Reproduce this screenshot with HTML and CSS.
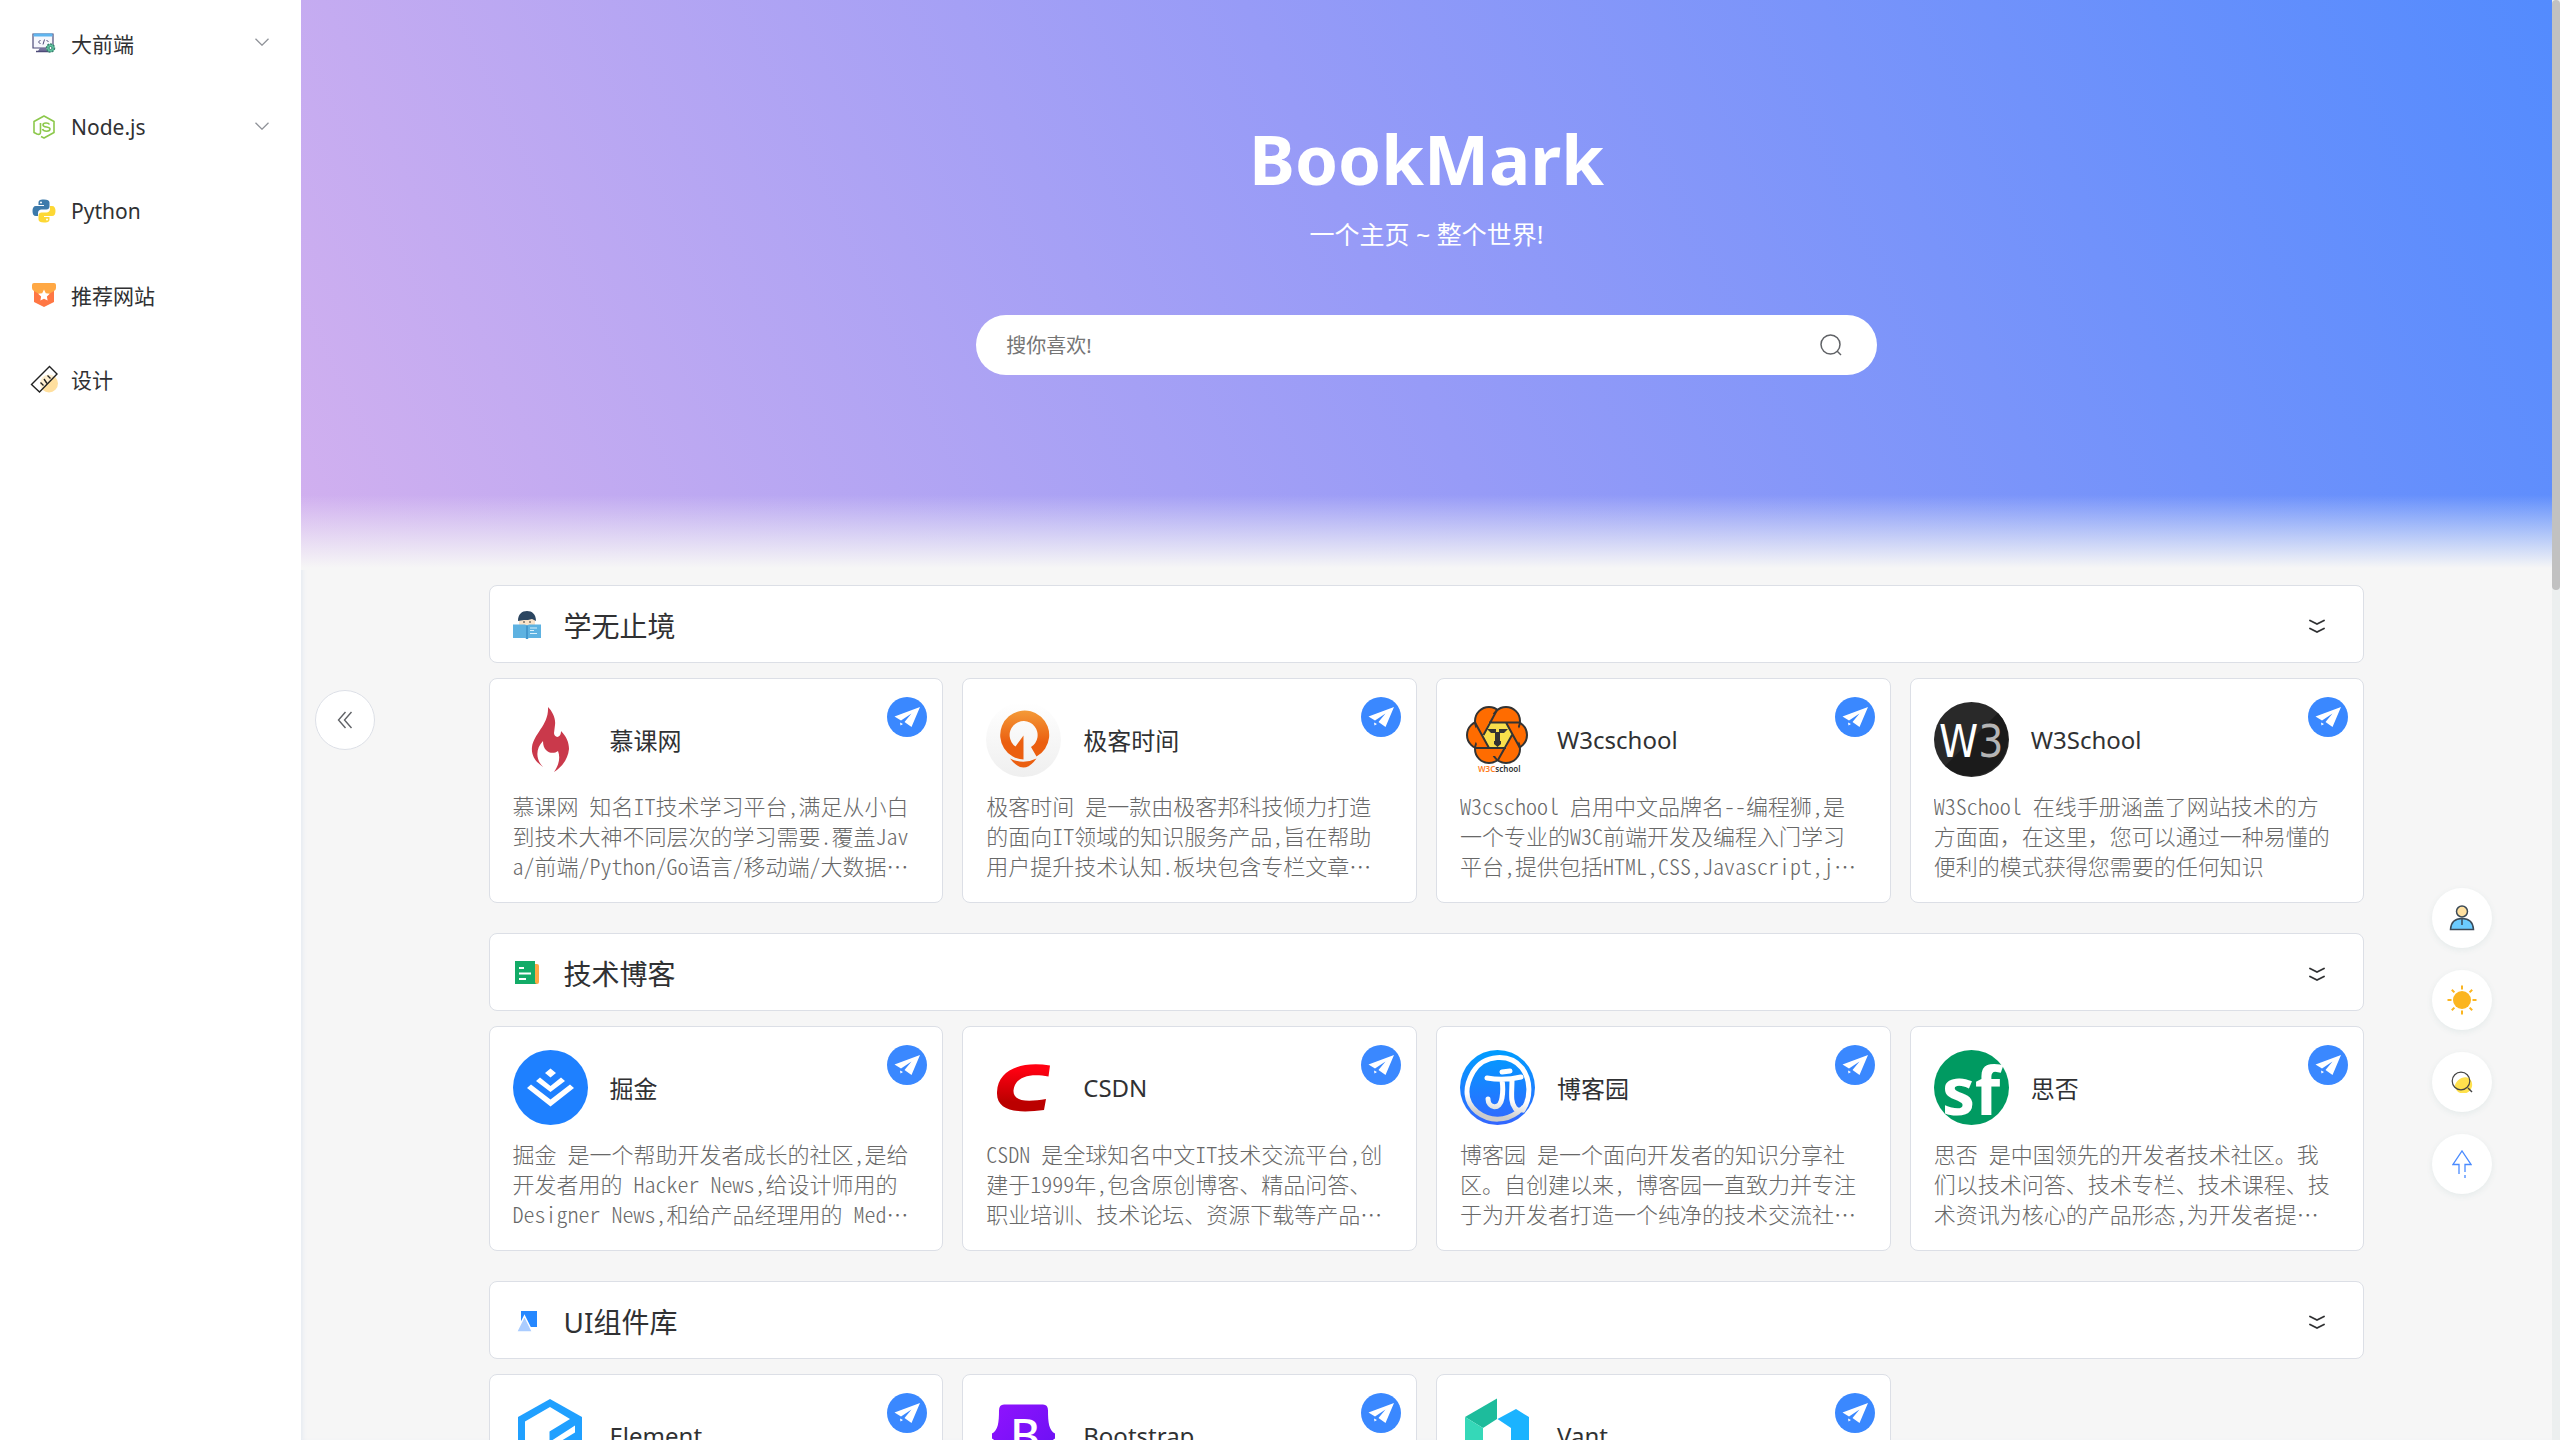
FILE: index.html
```html
<!DOCTYPE html>
<html lang="zh-CN">
<head>
<meta charset="utf-8">
<title>BookMark</title>
<link rel="stylesheet" href="styles.css">
</head>
<body>
<svg class="sprite" aria-hidden="true">
  <defs>
    <symbol id="plane" viewBox="0 0 40 40">
      <circle cx="20" cy="20" r="20" fill="#3a88ff"/>
      <path d="M33 10 7.500 19.500 14 23.500 24.500 16.500 17.500 25 24.500 30Z M13 25.500 16 27 13.500 28.500Z" fill="#fff"/>
    </symbol>
    <symbol id="down" viewBox="0 0 14 8">
      <path d="M.5.800 7 7.200 13.500.8" fill="none" stroke="#909399" stroke-width="1.300"/>
    </symbol>
    <symbol id="double-down" viewBox="0 0 16 14">
      <path d="M1 1.500 8 5 15 1.500M1 9.500 8 13 15 9.500" fill="none" stroke="#303133" stroke-width="1.800" stroke-linecap="round"/>
    </symbol>
  </defs>
</svg>
<div class="layout">
  <nav class="sidebar" aria-label="分类">
    <a class="menu-item" href="#frontend">
      <svg class="menu-icon" viewBox="0 0 24 24"><path d="M1 3h20v14H1z" fill="#f6f7fc" stroke="#4d4b78" stroke-width="1.200"/><path d="M1.500 2.500h19v3h-19z" fill="#5fb4ee"/><path d="M8 17h6l1 3H6z" fill="#74729b"/><path d="M4 20.500h13" stroke="#4d4b78" stroke-width="1.500"/><path d="M8.500 9 6.500 11l2 2M12.500 8.500l-1.500 5M14.500 9l2 2" fill="none" stroke="#4d4b78"/><circle cx="18.500" cy="17" r="4" fill="#5fc6a0" stroke="#3a806f" stroke-width="1.500" stroke-dasharray="2 1"/><circle cx="18.500" cy="17" r="1.500" fill="#fff" stroke="#3a806f"/></svg>
      <span>大前端</span>
      <svg class="menu-arrow"><use href="#down"/></svg>
    </a>
    <a class="menu-item" href="#node">
      <svg class="menu-icon" viewBox="0 0 24 24"><path d="M9 21.500 12 23l10-5.500V6.500L12 1 2 6.500v11l3 1.500c2.500 1 3.500 0 3.500-2V8" fill="none" stroke="#8cc84b" stroke-width="1.600" stroke-linejoin="round"/><path d="M17.500 9.500c-1-2-6.500-2-6.500.5 0 3 7 1 7 4 0 3-6.500 3-7.500 0" fill="none" stroke="#8cc84b" stroke-width="1.600"/></svg>
      <span>Node.js</span>
      <svg class="menu-arrow"><use href="#down"/></svg>
    </a>
    <a class="menu-item" href="#python">
      <svg class="menu-icon" viewBox="0 0 24 24"><path d="M12 .5c-5 0-5.500 1.500-5.500 3V6H12v1H4C1.500 7 .5 9 .5 12S1.500 17 4 17h2v-3c0-2 1.500-3.500 3.500-3.500h5c1.500 0 3-1 3-3v-4c0-2-2-3-5.500-3Z" fill="#3d7aab"/><path d="M12 23.500c5 0 5.500-1.500 5.500-3V18H12v-1h8c2.500 0 3.500-2 3.500-5S22.500 7 20 7h-2v3c0 2-1.500 3.500-3.500 3.500h-5c-1.500 0-3 1-3 3v4c0 2 2 3 5.500 3Z" fill="#fdd835"/><circle cx="9" cy="3.500" r="1" fill="#fff"/><circle cx="15" cy="20.500" r="1" fill="#fff"/></svg>
      <span>Python</span>
    </a>
    <a class="menu-item" href="#recommend">
      <svg class="menu-icon" viewBox="0 0 24 24"><path d="M2 4h20v15l-10 5-10-5z" fill="#ff7744"/><path d="M0 2q0-2 2-2h20q2 0 2 2v3q0 2-2 3l-10 6L2 8Q0 7 0 5z" fill="#ffa844"/><path d="m12 6.500 1.800 3.700 4 .6-2.900 2.800.7 4-3.600-1.900-3.600 1.900.7-4-2.900-2.800 4-.6z" fill="#fff"/></svg>
      <span>推荐网站</span>
    </a>
    <a class="menu-item" href="#design">
      <svg class="menu-icon" viewBox="0 0 24 24"><circle cx="17" cy="16.500" r="9" fill="#ffdf9e"/><path d="M-.5 17.500 17.500-.5l7.500 7.500L7.500 25z" fill="#fff" fill-opacity=".5" stroke="#222" stroke-width="1.400"/><path d="m8.500 15.500 3 3M12 12l3 4.500M15.500 8.500l3 3" stroke="#222" stroke-width="1.400"/></svg>
      <span>设计</span>
    </a>
  </nav>

  <main class="content">
    <header class="hero">
      <h1 class="hero-title">BookMark</h1>
      <p class="hero-sub">一个主页 ~ 整个世界!</p>
      <form class="search">
        <input class="search-input" type="text" placeholder="搜你喜欢!" aria-label="搜索">
        <button class="search-button" type="button" aria-label="搜索"><svg width="24" height="24" viewBox="0 0 24 24"><circle cx="11.500" cy="11.500" r="9.500" fill="none" stroke="#606266" stroke-width="1.500"/><path d="m18 18 4 4" stroke="#606266" stroke-width="1.500"/></svg></button>
      </form>
    </header>

    <div class="sections">
      <section class="section">
        <div class="section-head">
          <svg class="section-icon" viewBox="0 0 28 28"><path d="M6 7h16v8H6z" fill="#fbe3c8"/><path d="M5 10C5 3 9 0 14 0s9 3 9 10l-4-2-4 1-4 0z" fill="#2b4560"/><circle cx="11" cy="11" r=".8" fill="#222"/><circle cx="17" cy="11" r=".8" fill="#222"/><path d="M0 13.500h12l2 1 2-1h12V27H16l-2 1-2-1H0z" fill="#5eb2e1"/><path d="M13 14.500h2V28h-2z" fill="#4497cd"/><path d="M17 17h7M17 19.500h4M17 22.500h7" stroke="#d9f0fb"/></svg>
          <h2 class="section-title">学无止境</h2>
          <button class="toggle" type="button" aria-label="展开"><svg width="16" height="14"><use href="#double-down"/></svg></button>
        </div>
        <div class="cards">
          <article class="card">
            <div class="card-head">
              <svg class="avatar" viewBox="0 0 75 75"><path d="M35 5C39 9 43 16 42 23L41 31C41 36 48 37 48 29C53 34 56 40 56 47C55 57 49 65 41 70C45 64 48 57 45 49C40 53 30 51 30 39C23 46 22 57 30 65C23 60 18 54 19 45C21 31 36 23 35 5Z" fill="#ca394b"/></svg>
              <h3 class="card-title">慕课网</h3>
            </div>
            <p class="card-desc">慕课网 知名IT技术学习平台,满足从小白到技术大神不同层次的学习需要.覆盖Java/前端/Python/Go语言/移动端/大数据/云计算等课程</p>
            <a class="go" href="#imooc" aria-label="打开慕课网"><svg><use href="#plane"/></svg></a>
          </article>
          <article class="card">
            <div class="card-head">
              <svg class="avatar" viewBox="0 0 75 75"><defs><linearGradient id="geek" x2="0" y2="1"><stop offset="0" stop-color="#f49a38"/><stop offset=".65" stop-color="#eb5f10"/></linearGradient><linearGradient id="geekbg" x2="0" y2="1"><stop offset="0" stop-color="#fff"/><stop offset="1" stop-color="#efefef"/></linearGradient></defs><circle cx="37.500" cy="37.500" r="37.500" fill="url(#geekbg)"/><path d="M37.500 57.500A24.500 24.500 0 1 1 50.500 54.500L45 45A14 14 0 1 0 29.500 44.500L37.500 33.500Z" fill="url(#geek)"/><path d="M24 56.500Q37.500 63 50.500 56.500Q44 65.500 37.500 65.500T24 56.500Z" fill="#eb5f10"/></svg>
              <h3 class="card-title">极客时间</h3>
            </div>
            <p class="card-desc">极客时间 是一款由极客邦科技倾力打造的面向IT领域的知识服务产品,旨在帮助用户提升技术认知.板块包含专栏文章、视频课程等内容</p>
            <a class="go" href="#geekbang" aria-label="打开极客时间"><svg><use href="#plane"/></svg></a>
          </article>
          <article class="card">
            <div class="card-head">
              <svg class="avatar" viewBox="0 0 75 75"><g fill="#ff6c00" stroke="#333" stroke-width="2"><circle cx="21" cy="33" r="14"/><circle cx="53" cy="33" r="14"/><circle cx="29" cy="19" r="14"/><circle cx="46" cy="19" r="14"/><circle cx="29" cy="47" r="14"/><circle cx="46" cy="47" r="14"/></g><path d="M22 12h30l10 21-10 21H22L13 33z" fill="#ff6c00"/><path d="M29 20.500h17L52 33l-6 13H29l-6-13z" fill="#f8df4b"/><path d="M37 8 23.500 33M60 20.500H29M60 46 46 20.500M38 58 52 33M15 46h31M15 20.500 29 46" stroke="#333" stroke-width="2"/><path d="M27 27h9v3h3v-3h9l-4 4h-4v8h-5v-8h-4zM34 39h7v3l-3.500 3-3.500-3z" fill="#333"/><text x="18" y="70" class="lion-text"><tspan fill="#ff7d1c">W3C</tspan>school</text></svg>
              <h3 class="card-title">W3cschool</h3>
            </div>
            <p class="card-desc">W3cschool 启用中文品牌名--编程狮,是一个专业的W3C前端开发及编程入门学习平台,提供包括HTML,CSS,Javascript,jQuery,PHP等教程</p>
            <a class="go" href="#w3cschool" aria-label="打开W3cschool"><svg><use href="#plane"/></svg></a>
          </article>
          <article class="card">
            <div class="card-head">
              <svg class="avatar" viewBox="0 0 75 75"><circle cx="37.500" cy="37.500" r="37.500" fill="#292929"/><path d="M64 11A37.500 37.500 0 0 1 11 64Z" fill="#1b1b1b"/><text x="5" y="55" class="w3-text" fill="#fff">W<tspan fill="#b5b5b5">3</tspan></text></svg>
              <h3 class="card-title">W3School</h3>
            </div>
            <p class="card-desc">W3School 在线手册涵盖了网站技术的方方面面<span class="full-width">，</span>在这里<span class="full-width">，</span>您可以通过一种易懂的便利的模式获得您需要的任何知识</p>
            <a class="go" href="#w3school" aria-label="打开W3School"><svg><use href="#plane"/></svg></a>
          </article>
        </div>
      </section>

      <section class="section">
        <div class="section-head">
          <svg class="section-icon" viewBox="0 0 28 28"><path d="M18 5h6q2 0 2 2v16q0 2-2 2h-6z" fill="#ffa844"/><path d="M2 2h20v21q0 2 2 2H2z" fill="#12ab67"/><path d="M6 9h5M6 14.500h12M6 20h7" stroke="#fff" stroke-width="2"/></svg>
          <h2 class="section-title">技术博客</h2>
          <button class="toggle" type="button" aria-label="展开"><svg width="16" height="14"><use href="#double-down"/></svg></button>
        </div>
        <div class="cards">
          <article class="card">
            <div class="card-head">
              <svg class="avatar" viewBox="0 0 75 75"><circle cx="37.500" cy="37.500" r="37.500" fill="#1e80ff"/><path d="m37.500 18.500 5.500 4.500-5.500 4.500L32 23zM23 31l4-3.500 10.500 8.500L48 27.500l4 3.500-14.500 11zM14 38l4-3.500L37.500 49.500 57 34.500l4 3.500-23.500 18.500z" fill="#fff"/></svg>
              <h3 class="card-title">掘金</h3>
            </div>
            <p class="card-desc">掘金 是一个帮助开发者成长的社区,是给开发者用的 Hacker News,给设计师用的 Designer News,和给产品经理用的 Medium。</p>
            <a class="go" href="#juejin" aria-label="打开掘金"><svg><use href="#plane"/></svg></a>
          </article>
          <article class="card">
            <div class="card-head">
              <svg class="avatar" viewBox="0 0 75 75"><defs><linearGradient id="csdn" x2="0" y2="1"><stop offset=".1" stop-color="#ff0011"/><stop offset=".8" stop-color="#bb0000"/></linearGradient></defs><path d="M64 15.500 62.500 26.500C45 23 29 26 27.500 40.500C27 52 42 52 60 49L58 60C35 63 10 63 11 42C12 20 34 11 64 15.500Z" fill="url(#csdn)"/></svg>
              <h3 class="card-title">CSDN</h3>
            </div>
            <p class="card-desc">CSDN 是全球知名中文IT技术交流平台,创建于1999年,包含原创博客、精品问答、职业培训、技术论坛、资源下载等产品服务</p>
            <a class="go" href="#csdn-site" aria-label="打开CSDN"><svg><use href="#plane"/></svg></a>
          </article>
          <article class="card">
            <div class="card-head">
              <svg class="avatar" viewBox="0 0 75 75"><defs><linearGradient id="blog" x2="0" y2="1"><stop offset="0" stop-color="#009dff"/><stop offset="1" stop-color="#3366ff"/></linearGradient><linearGradient id="blogw" gradientUnits="userSpaceOnUse" x1="40" y1="30" x2="34" y2="70"><stop offset=".45" stop-color="#fff"/><stop offset=".9" stop-color="#ccc"/></linearGradient></defs><circle cx="37.500" cy="37.500" r="37.500" fill="url(#blog)"/><g fill="none" stroke="url(#blogw)" stroke-width="5" stroke-linecap="round"><path d="M63 60C71 48 71 30 62 18C50 3 24 4 13 22C4 38 5 52 17 62C30 72 46 71 58 62"/><path d="M27 28Q44 31 61 27M42 22l8-1M42 30c1 6 1 12 0 18-2 13-14 10-14 1M52 30c0 12-2 22 3 28 2 3 6 3 8 0"/></g></svg>
              <h3 class="card-title">博客园</h3>
            </div>
            <p class="card-desc">博客园 是一个面向开发者的知识分享社区。自创建以来, 博客园一直致力并专注于为开发者打造一个纯净的技术交流社区，推动并帮助开发者</p>
            <a class="go" href="#cnblogs" aria-label="打开博客园"><svg><use href="#plane"/></svg></a>
          </article>
          <article class="card">
            <div class="card-head">
              <svg class="avatar" viewBox="0 0 75 75"><circle cx="37.500" cy="37.500" r="37.500" fill="#009a61"/><text x="8" y="65" class="sf-text">sf</text></svg>
              <h3 class="card-title">思否</h3>
            </div>
            <p class="card-desc">思否 是中国领先的开发者技术社区。我们以技术问答、技术专栏、技术课程、技术资讯为核心的产品形态,为开发者提供纯粹、高质的技术交流平台</p>
            <a class="go" href="#segmentfault" aria-label="打开思否"><svg><use href="#plane"/></svg></a>
          </article>
        </div>
      </section>

      <section class="section">
        <div class="section-head">
          <svg class="section-icon" viewBox="0 0 28 28"><path d="M8 4h16v16H8z" fill="#2688ff"/><path d="m11.500 9 8 16h-16z" fill="#aaccff" stroke="#fff" stroke-width="1.500"/></svg>
          <h2 class="section-title">UI组件库</h2>
          <button class="toggle" type="button" aria-label="展开"><svg width="16" height="14"><use href="#double-down"/></svg></button>
        </div>
        <div class="cards">
          <article class="card">
            <div class="card-head">
              <svg class="avatar" viewBox="0 0 75 75"><path d="m37 1 32 18v37L37 74 5 56V19z" fill="#20a0ff"/><path d="M12 23.500 37 9l20 12-20.500 12.500V44L62 27.500v7L36.500 50v9L62 45v7L37 66 12 52z" fill="#fff"/></svg>
              <h3 class="card-title">Element</h3>
            </div>
            <a class="go" href="#element" aria-label="打开Element"><svg><use href="#plane"/></svg></a>
          </article>
          <article class="card">
            <div class="card-head">
              <svg class="avatar" viewBox="0 0 75 75"><defs><linearGradient id="boot" x2="1" y2="1"><stop offset="0" stop-color="#9013fe"/><stop offset="1" stop-color="#6610f2"/></linearGradient></defs><path d="M18 6.500h39q5 0 5 6c0 12 1 20 7 23v5c-6 3-7 11-7 23q0 6-5 6H18q-5 0-5-6c0-12-1-20-7-23v-5c6-3 7-11 7-23q0-6 5-6z" fill="url(#boot)"/><text x="24" y="54" class="boot-text">B</text></svg>
              <h3 class="card-title">Bootstrap</h3>
            </div>
            <a class="go" href="#bootstrap" aria-label="打开Bootstrap"><svg><use href="#plane"/></svg></a>
          </article>
          <article class="card">
            <div class="card-head">
              <svg class="avatar" viewBox="0 0 75 75"><path d="M5 19 37 .5V21L23 30z" fill="#1dbc9c"/><path d="m5 19 18 11v34L5 54z" fill="#35d8b8"/><path d="m37.500 21 18.500-10 13 8v35l-18 10V30z" fill="#1bb3ff"/></svg>
              <h3 class="card-title">Vant</h3>
            </div>
            <a class="go" href="#vant" aria-label="打开Vant"><svg><use href="#plane"/></svg></a>
          </article>
        </div>
      </section>
    </div>
  </main>
  <div class="scroll-track"><div class="scroll-thumb"></div></div>
</div>

<button class="collapse" type="button" aria-label="收起菜单"><svg width="16" height="18" viewBox="0 0 16 18"><path d="M8.500 1 1.500 9l7 8M14.500 1l-7 8 7 8" fill="none" stroke="#606266" stroke-width="1.400"/></svg></button>
<div class="tools">
  <button class="tool" type="button" aria-label="用户"><svg width="28" height="28" viewBox="0 0 28 28"><circle cx="14" cy="7.500" r="5.500" fill="#ffe0a0" stroke="#3c4a57" stroke-width="1.500"/><path d="M2.500 25.500C3 17.500 7 14.500 14 14.500S25 17.500 25.500 25.500Z" fill="#6bcbff" stroke="#3c4a57" stroke-width="1.500"/><path d="M14 15v6" stroke="#3c4a57" stroke-width="1.500"/></svg></button>
  <button class="tool" type="button" aria-label="主题"><svg width="30" height="30" viewBox="0 0 30 30"><circle cx="15" cy="15" r="9" fill="#fbb520"/><path d="M15 .5v4M15 25.500v4M.5 15h4M25.500 15h4M4.800 4.800l2.600 2.600M22.600 22.600l2.600 2.600M4.800 25.200l2.600-2.600M22.600 7.400l2.600-2.600" stroke="#fbb520" stroke-width="2"/></svg></button>
  <button class="tool" type="button" aria-label="搜索"><svg width="22" height="22" viewBox="0 0 22 22"><path d="M18 7A8.800 8.800 0 1 1 4 16.500C3 11 11 4 18 7Z" fill="#ffe14d"/><circle cx="10" cy="10" r="8.800" fill="none" stroke="#444" stroke-width="1.200"/><path d="m17 17 4 4" stroke="#444" stroke-width="1.400"/></svg></button>
  <button class="tool" type="button" aria-label="返回顶部"><svg width="20" height="28" viewBox="0 0 20 28"><path d="M7 24V14.500H1L10 1l9 13.500h-6V22M13 25v3" fill="none" stroke="#4a8bff" stroke-width="1.300"/></svg></button>
</div>
</body>
</html>
```

FILE: styles.css
```css
* {
  box-sizing: border-box;
}

body {
  margin: 0;
  height: 100vh;
  overflow: hidden;
  background: #f6f6f6;
  color: #303133;
  font-family: "Noto Sans", "Noto Sans CJK SC", sans-serif;
}

h1, h2, h3, p {
  margin: 0;
  font-weight: 400;
}

button {
  padding: 0;
  border: 0;
  background: none;
  cursor: pointer;
}

.sprite {
  display: none;
}

.layout {
  display: flex;
  height: 100vh;
}

/* Sidebar */
.sidebar {
  flex: 0 0 301px;
  padding-top: 1px;
  background: #fff;
}

.menu-item {
  display: flex;
  align-items: center;
  height: 84px;
  padding: 0 32px;
  color: #303133;
  font-size: 21px;
  text-decoration: none;
}

.menu-icon {
  width: 24px;
  height: 24px;
  margin-right: 15px;
  overflow: visible;
}

.menu-arrow {
  width: 14px;
  height: 8px;
  margin-bottom: 2px;
  margin-left: auto;
}

/* Main column */
.content {
  flex: 1;
  min-width: 0;
  overflow: hidden;
  box-shadow: inset 4px 0 4px -2px #e6ebf2;
}

.hero {
  display: flex;
  flex-direction: column;
  align-items: center;
  height: 570px;
  padding-top: 112px;
  color: #fff;
  background:
    linear-gradient(to bottom, transparent 495px, #f6f6f6 568px),
    linear-gradient(65deg, #d2b0ef 0%, #979bf7 48%, #538bfe 100%);
}

.hero-title {
  font-size: 69px;
  font-weight: 700;
  line-height: 92px;
}

.hero-sub {
  margin-top: 12px;
  font-size: 25px;
  line-height: 36px;
}

.search {
  display: flex;
  align-items: center;
  width: 40%;
  height: 60px;
  margin-top: 63px;
  padding: 0 34px 0 30px;
  border-radius: 30px;
  background: #fff;
}

.search-input {
  flex: 1;
  padding: 0;
  border: 0;
  outline: 0;
  background: none;
  font: inherit;
  font-size: 20px;
}

.search-input::placeholder {
  color: #757575;
}

.search-button {
  display: flex;
}

.sections {
  width: 83.34%;
  margin: 0 auto;
  padding-top: 15px;
}

.section {
  margin-bottom: 30px;
}

.section-head {
  display: flex;
  align-items: center;
  height: 78px;
  padding: 2px 38px 0 23px;
  border: 1px solid #dcdfe6;
  border-radius: 8px;
  background: #fff;
}

.section-icon {
  width: 28px;
  height: 28px;
  margin-right: 23px;
}

.section-title {
  font-size: 28px;
}

.toggle {
  display: flex;
  margin-top: 2px;
  margin-left: auto;
}

.cards {
  display: grid;
  grid-template-columns: repeat(4, minmax(0, 1fr));
  gap: 19px;
  margin-top: 15px;
}

.card {
  position: relative;
  min-height: 225px;
  padding: 23px 23px 20px;
  border: 1px solid #dcdfe6;
  border-radius: 8px;
  background: #fff;
}

.card-head {
  display: flex;
  align-items: center;
}

.avatar {
  width: 75px;
  height: 75px;
  margin-right: 22px;
}

.card-title {
  font-size: 24px;
}

.card-desc {
  display: -webkit-box;
  margin-top: 13px;
  overflow: hidden;
  color: #686868;
  font-family: "Noto Sans CJK SC", monospace;
  font-feature-settings: "hwid";
  font-size: 22px;
  font-weight: 300;
  line-height: 30px;
  word-break: break-all;
  -webkit-box-orient: vertical;
  -webkit-line-clamp: 3;
}

.full-width {
  font-feature-settings: normal;
}

.go {
  position: absolute;
  top: 18px;
  right: 15px;
  width: 40px;
  height: 40px;
}

.go svg {
  display: block;
  width: 40px;
  height: 40px;
}

.lion-text {
  fill: #333;
  font-size: 8px;
  font-weight: 600;
}

.w3-text {
  font-family: "DejaVu Sans Condensed", "DejaVu Sans", sans-serif;
  font-size: 44px;
}

.sf-text {
  fill: #fff;
  font-family: "Open Sans", sans-serif;
  font-size: 66px;
  font-weight: 700;
}

.boot-text {
  fill: #fff;
  font-size: 46px;
  font-weight: 500;
}

/* Scroll bar */
.scroll-track {
  flex: 0 0 8px;
  background: #ecefef;
}

.scroll-thumb {
  height: 41%;
  border-radius: 4px;
  background: #c1c1c1;
}

/* Floating buttons */
.collapse {
  position: fixed;
  top: calc(50% - 30px);
  left: 315px;
  display: flex;
  align-items: center;
  justify-content: center;
  width: 60px;
  height: 60px;
  border: 1px solid #dcdfe6;
  border-radius: 50%;
  background: #fff;
}

.tools {
  position: fixed;
  right: 68px;
  bottom: 246px;
  display: grid;
  gap: 22px;
}

.tool {
  display: flex;
  align-items: center;
  justify-content: center;
  width: 60px;
  height: 60px;
  border-radius: 50%;
  background: #fff;
  box-shadow: 0 2px 6px #e4eaea;
}
```
